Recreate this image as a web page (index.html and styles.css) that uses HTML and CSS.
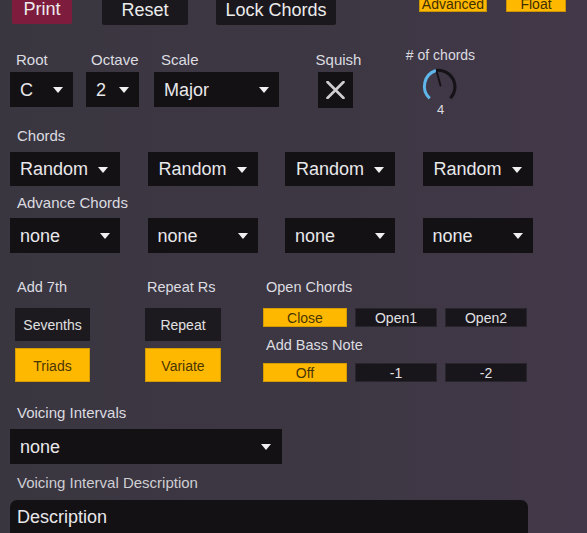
FILE: index.html
```html
<!DOCTYPE html>
<html>
<head>
<meta charset="utf-8">
<link rel="stylesheet" href="styles.css">
</head>
<body>
<div class="panel">
  <div class="topbar">
    <div class="tbtn print">Print</div>
    <div class="tbtn reset">Reset</div>
    <div class="tbtn lock">Lock Chords</div>
    <div class="tog adv">Advanced</div>
    <div class="tog flt">Float</div>
  </div>

  <div class="row1">
    <div class="group g-root">
      <div class="lbl">Root</div>
      <div class="dd dd-root"><span>C</span><span class="caret"></span></div>
    </div>
    <div class="group g-oct">
      <div class="lbl">Octave</div>
      <div class="dd dd-oct"><span>2</span><span class="caret"></span></div>
    </div>
    <div class="group g-scale">
      <div class="lbl">Scale</div>
      <div class="dd dd-scale"><span>Major</span><span class="caret"></span></div>
    </div>
    <div class="group g-squish">
      <div class="lbl lbl-c">Squish</div>
      <div class="squish">
        <svg width="19" height="18" viewBox="0 0 19 18"><path d="M1.5 1 L17.5 17 M17.5 1 L1.5 17" stroke="#cfcfd2" stroke-width="2.6" stroke-linecap="round" fill="none"/></svg>
      </div>
    </div>
    <div class="group g-knob">
      <div class="lbl lbl-knob">#&nbsp;of chords</div>
      <svg class="knob" width="40" height="40" viewBox="0 0 40 40">
        <path d="M30.3 32.3 A16.5 16.5 0 0 0 15.9 4.5" stroke="#161318" stroke-width="3" fill="none"/>
        <path d="M9.7 32.3 A16.5 16.5 0 0 1 15.9 4.5" stroke="#5fb6ea" stroke-width="3" fill="none"/>
        <path d="M20.5 19.5 L16.8 6" stroke="#161318" stroke-width="2" stroke-linecap="round"/>
      </svg>
      <div class="knobval">4</div>
    </div>
  </div>

  <div class="lbl sec-chords">Chords</div>
  <div class="ddgrid">
    <div class="dd"><span>Random</span><span class="caret"></span></div>
    <div class="dd"><span>Random</span><span class="caret"></span></div>
    <div class="dd"><span>Random</span><span class="caret"></span></div>
    <div class="dd"><span>Random</span><span class="caret"></span></div>
  </div>
  <div class="lbl sec-adv">Advance Chords</div>
  <div class="ddgrid ddgrid2">
    <div class="dd"><span>none</span><span class="caret"></span></div>
    <div class="dd"><span>none</span><span class="caret"></span></div>
    <div class="dd"><span>none</span><span class="caret"></span></div>
    <div class="dd"><span>none</span><span class="caret"></span></div>
  </div>

  <div class="row3">
    <div class="group g-7th">
      <div class="lbl lbl-s">Add 7th</div>
      <div class="bigbtn dark b1">Sevenths</div>
      <div class="bigbtn on b2">Triads</div>
    </div>
    <div class="group g-rep">
      <div class="lbl lbl-s">Repeat Rs</div>
      <div class="bigbtn dark b1">Repeat</div>
      <div class="bigbtn on b2">Variate</div>
    </div>
    <div class="group g-open">
      <div class="lbl lbl-s">Open Chords</div>
      <div class="seg">
        <div class="segbtn on">Close</div>
        <div class="segbtn">Open1</div>
        <div class="segbtn">Open2</div>
      </div>
      <div class="lbl lbl-s lbl-bass">Add Bass Note</div>
      <div class="seg">
        <div class="segbtn on">Off</div>
        <div class="segbtn">-1</div>
        <div class="segbtn">-2</div>
      </div>
    </div>
  </div>

  <div class="lbl sec-voicing">Voicing Intervals</div>
  <div class="dd dd-voicing"><span>none</span><span class="caret"></span></div>
  <div class="lbl sec-desc">Voicing Interval Description</div>
  <div class="descfield">Description</div>
</div>
</body>
</html>
```

FILE: styles.css
```css
html, body {
  margin: 0;
  padding: 0;
}
body {
  width: 587px;
  height: 533px;
  overflow: hidden;
  background: linear-gradient(90deg, #3a3640 0%, #3d3743 60%, #433849 100%);
  font-family: "Liberation Sans", Arial, sans-serif;
  color: #dcdce0;
}
.panel {
  padding-left: 10px;
}

/* top bar */
.topbar {
  display: flex;
  align-items: flex-start;
  margin-top: -6px;
}
.tbtn {
  display: flex;
  align-items: center;
  justify-content: center;
  padding-top: 1px;
  box-sizing: border-box;
  font-size: 18px;
  color: #ececec;
  height: 31px;
  border-radius: 2px;
}
.print {
  margin-left: 2px;
  width: 60px;
  height: 30px;
  background: #7e1c3e;
}
.reset {
  margin-left: 30px;
  width: 86px;
  background: #1b181d;
}
.lock {
  margin-left: 28px;
  width: 120px;
  background: #1b181d;
}
.tog {
  height: 18px;
  box-sizing: border-box;
  background: #ffb800;
  border: 1px solid #c99400;
  color: #3f2e00;
  font-size: 14px;
  display: flex;
  align-items: center;
  justify-content: center;
  padding-top: 2px;
}
.adv {
  margin-left: 83px;
  width: 68px;
}
.flt {
  margin-left: 19px;
  width: 60px;
}

/* labels */
.lbl {
  font-size: 15px;
  line-height: 18px;
  color: #dcdce0;
  white-space: nowrap;
}

/* row 1 */
.row1 {
  display: flex;
  align-items: flex-start;
  margin-top: 26px;
}
.group {
  display: flex;
  flex-direction: column;
}
.group .lbl {
  margin-bottom: 3px;
}
.g-root { width: 63px; }
.g-root .lbl { padding-left: 6px; }
.g-oct { margin-left: 13px; width: 53px; }
.g-oct .lbl { padding-left: 5px; }
.g-scale { margin-left: 15px; width: 125px; }
.g-scale .lbl { padding-left: 7px; }
.g-squish {
  margin-left: 36px;
  width: 45px;
  align-items: center;
}
.g-squish .lbl { margin-right: -2px; }
.squish {
  width: 35px;
  height: 36px;
  background: #141115;
  display: flex;
  align-items: center;
  justify-content: center;
  margin-right: 4px;
}
.g-knob {
  margin-left: 45px;
  width: 71px;
  align-items: center;
  margin-top: -5px;
  margin-bottom: -20px;
}
.g-knob .lbl-knob {
  font-size: 14px;
  margin-bottom: 2px;
}
.knob {
  display: block;
  margin-left: -2px;
}
.knobval {
  font-size: 13px;
  line-height: 14px;
  margin-top: -3px;
  color: #dcdce0;
}

/* dropdowns */
.dd {
  display: flex;
  align-items: center;
  justify-content: space-between;
  box-sizing: border-box;
  height: 35px;
  background: #141115;
  color: #e8e8ea;
  font-size: 18px;
  padding: 1px 10px 0 10px;
}
.dd-root { width: 63px; }
.dd-oct { width: 53px; }
.dd-scale { width: 125px; }
.caret {
  width: 0;
  height: 0;
  border-left: 5.5px solid transparent;
  border-right: 5.5px solid transparent;
  border-top: 6px solid #f0f0f0;
}

.sec-chords {
  margin-top: 19px;
  padding-left: 7px;
  margin-bottom: 7px;
}
.ddgrid {
  display: grid;
  grid-template-columns: 110px 110px 110px 110px;
  column-gap: 27.5px;
}
.ddgrid .dd {
  height: 34px;
  padding-left: 11px;
  padding-right: 10px;
}
.ddgrid .dd:first-child, .ddgrid2 .dd {
  padding-left: 10px;
}
.ddgrid2 .dd {
  height: 35px;
}
.ddgrid .dd span:first-child {
  flex: 0 0 auto;
}
.ddgrid:not(.ddgrid2) .dd {
  justify-content: flex-start;
  gap: 10px;
}
.sec-adv {
  margin-top: 8px;
  padding-left: 7px;
  margin-bottom: 6px;
}

/* row 3 */
.row3 {
  display: flex;
  align-items: flex-start;
  margin-top: 25px;
}
.row3 .group .lbl-s {
  margin-bottom: 12px;
  font-size: 14.5px;
}
.g-7th { margin-left: 5px; width: 75px; }
.g-7th .lbl { padding-left: 2px; }
.g-rep { margin-left: 55px; width: 76px; }
.g-rep .lbl { padding-left: 2px; }
.g-open { margin-left: 42px; width: 264px; }
.g-open .lbl { padding-left: 3px; }
.bigbtn {
  box-sizing: border-box;
  display: flex;
  align-items: center;
  justify-content: center;
  font-size: 14px;
  padding-top: 1px;
}
.bigbtn.b1 { height: 33px; }
.bigbtn.b2 { height: 34px; margin-top: 7px; }
.bigbtn.dark {
  background: #1d1a1f;
  color: #e0e0e2;
}
.on {
  background: #ffb800;
  border: 1px solid #d49c00;
  color: #4a3600;
}
.seg {
  display: grid;
  grid-template-columns: 84px 82px 82px;
  column-gap: 8px;
}
.segbtn {
  box-sizing: border-box;
  height: 19px;
  display: flex;
  align-items: center;
  justify-content: center;
  font-size: 14px;
  background: #19161b;
  border: 1px solid #29252c;
  color: #e2e2e4;
  padding-top: 1px;
}
.segbtn.on {
  background: #ffb800;
  border: 1px solid #d49c00;
  color: #4a3600;
}
.row3 .group .lbl-bass {
  margin-top: 9px;
  margin-bottom: 9px;
}

/* voicing */
.sec-voicing {
  margin-top: 22px;
  padding-left: 7px;
  margin-bottom: 7px;
}
.dd-voicing {
  width: 272px;
  padding-right: 11px;
}
.sec-desc {
  margin-top: 10px;
  padding-left: 7px;
  margin-bottom: 8px;
  color: #cfcfd3;
}
.descfield {
  box-sizing: border-box;
  width: 518px;
  height: 44px;
  background: #141115;
  border-radius: 7px;
  font-size: 18px;
  color: #e8e8ea;
  padding: 7px 0 0 7px;
}
```
